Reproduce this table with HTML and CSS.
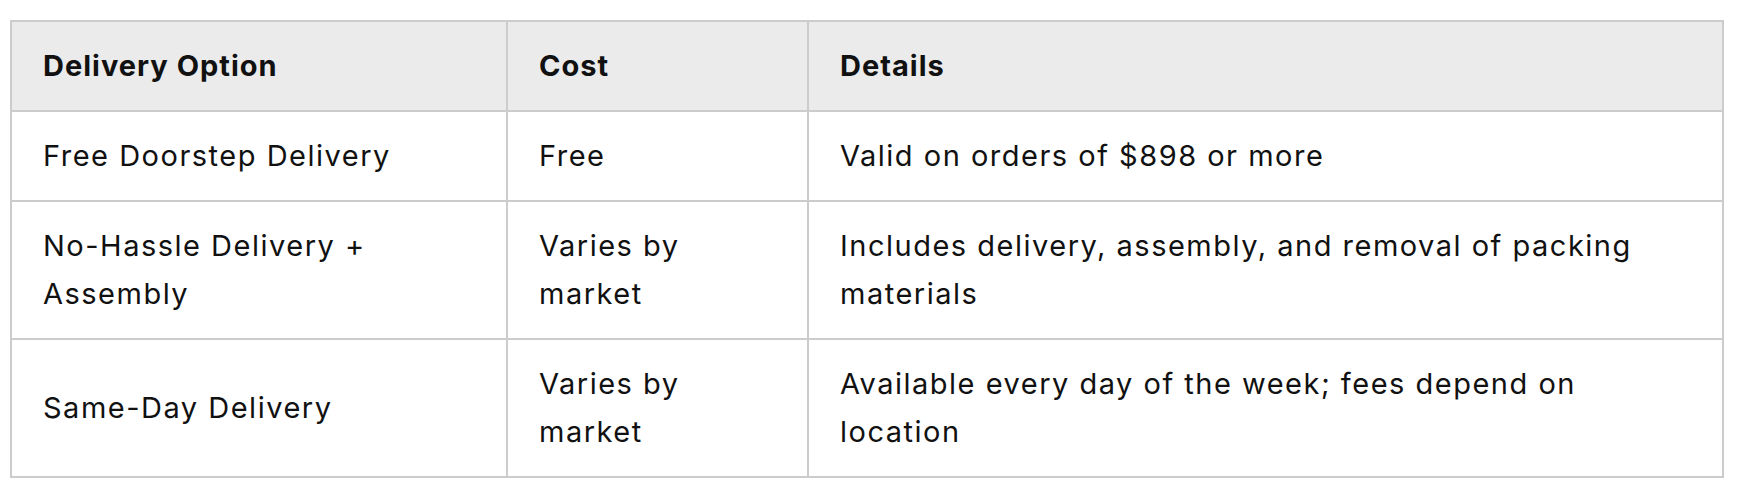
FILE: index.html
```html
<!DOCTYPE html>
<html lang="en">
<head>
<meta charset="utf-8">
<title>Delivery Options</title>
<link rel="stylesheet" href="styles.css">
</head>
<body>
<div class="wrap">
  <table class="delivery">
    <colgroup>
      <col class="c1">
      <col class="c2">
      <col class="c3">
    </colgroup>
    <thead>
      <tr>
        <th>Delivery Option</th>
        <th>Cost</th>
        <th>Details</th>
      </tr>
    </thead>
    <tbody>
      <tr>
        <td>Free Doorstep Delivery</td>
        <td>Free</td>
        <td>Valid on orders of $898 or more</td>
      </tr>
      <tr>
        <td>No-Hassle Delivery + Assembly</td>
        <td>Varies by market</td>
        <td>Includes delivery, assembly, and removal of packing materials</td>
      </tr>
      <tr>
        <td>Same-Day Delivery</td>
        <td>Varies by market</td>
        <td>Available every day of the week; fees depend on location</td>
      </tr>
    </tbody>
  </table>
</div>
</body>
</html>
```

FILE: styles.css
```css
html, body {
  margin: 0;
  padding: 0;
  background: #ffffff;
}

.wrap {
  padding: 20px 16px 0 10px;
}

.delivery {
  width: 1712px;
  table-layout: fixed;
  border-collapse: collapse;
  font-family: "Inter", "Noto Sans", sans-serif;
  font-size: 29px;
  letter-spacing: 1.5px;
  line-height: 48px;
  color: #111111;
}

.c1 { width: 496px; }
.c2 { width: 301px; }
.c3 { width: 915px; }

.delivery th,
.delivery td {
  border: 2px solid #cccccc;
  padding: 20px 32px 20px 31px;
  text-align: left;
  vertical-align: middle;
}

.delivery th {
  background: #ebebeb;
  font-weight: 700;
  letter-spacing: 1px;
}

.delivery td {
  font-weight: 400;
}
```
